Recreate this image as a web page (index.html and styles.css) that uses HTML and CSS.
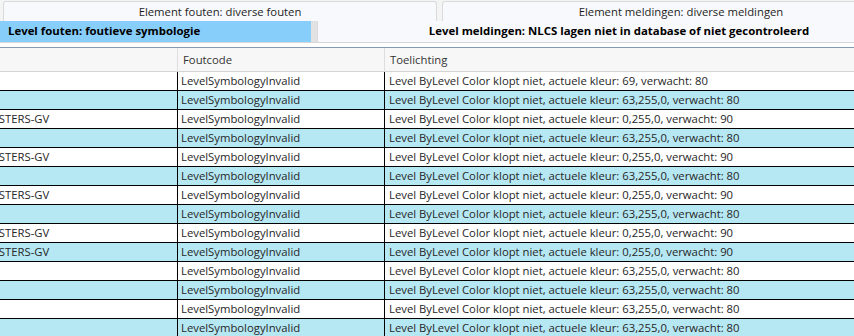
FILE: index.html
```html
<!DOCTYPE html>
<html lang="nl">
<head>
    <meta charset="UTF-8">
    <title>Controle resultaten</title>
    <link rel="stylesheet" href="styles.css">
</head>
<body>
    <div class="window">
        <div class="tab-row top">
            <div class="tab">Element fouten: diverse fouten</div>
            <div class="tab wide">Element meldingen: diverse meldingen</div>
        </div>
        <div class="tab-row front">
            <div class="tab selected">Level fouten: foutieve symbologie</div>
            <div class="tab wide">Level meldingen: NLCS lagen niet in database of niet gecontroleerd</div>
        </div>

        <div class="panel">
            <div class="grid-view">
                <div class="grid">
                    <div class="head">Level</div>
                    <div class="head">Foutcode</div>
                    <div class="head">Toelichting</div>
                </div>
                <div class="grid" id="rows"></div>
            </div>
        </div>
    </div>

    <script>
        // rijen met foutieve symbologie
        const rijen = [
            ['', '69', '80'],
            ['', '63,255,0', '80'],
            ['WEG-CLUSTERS-GV', '0,255,0', '90'],
            ['', '63,255,0', '80'],
            ['WEG-CLUSTERS-GV', '0,255,0', '90'],
            ['', '63,255,0', '80'],
            ['WEG-CLUSTERS-GV', '0,255,0', '90'],
            ['', '63,255,0', '80'],
            ['WEG-CLUSTERS-GV', '0,255,0', '90'],
            ['WEG-CLUSTERS-GV', '0,255,0', '90'],
            ['', '63,255,0', '80'],
            ['', '63,255,0', '80'],
            ['', '63,255,0', '80'],
            ['', '63,255,0', '80']
        ];

        const rows = document.getElementById('rows');
        rijen.forEach((r, i) => {
            const cls = i % 2 ? 'cell alt' : 'cell';
            rows.insertAdjacentHTML('beforeend',
                `<div class="${cls}">${r[0]}</div>` +
                `<div class="${cls} code">LevelSymbologyInvalid</div>` +
                `<div class="${cls} note">Level ByLevel Color klopt niet, actuele kleur: ${r[1]}, verwacht: ${r[2]}</div>`);
        });
    </script>
</body>
</html>
```

FILE: styles.css
```css
* {
    margin: 0;
    padding: 0;
    box-sizing: border-box;
}

body {
    font-family: 'Open Sans', 'Liberation Sans', sans-serif;
    font-size: 11.3px;
    color: #262626;
    background: #ffffff;
    overflow: hidden;
}

.window {
    width: 854px;
    height: 336px;
    overflow: hidden;
}

/* Tabbladen */
.tab-row {
    display: flex;
    width: 940px;
}

.tab-row.top {
    height: 21px;
    padding-top: 1px;
    padding-left: 3px;
    gap: 5px;
    background: #f4f4f4;
}

.tab-row.front {
    height: 22px;
    gap: 6px;
    background: #e2e2e2;
    border-bottom: 1px solid #d6d6d6;
}

.tab {
    height: 20px;
    line-height: 19px;
    text-align: center;
    background: #f8f9fc;
    border: 1px solid #dadada;
    border-bottom: none;
    border-radius: 3px 3px 0 0;
    width: 434px;
    color: #1e1e1e;
}

.tab.wide {
    width: 478px;
}

.tab-row.front .tab {
    height: 21px;
    line-height: 20px;
    font-size: 11.4px;
    font-weight: 700;
    color: #000;
    width: 604px;
    border-radius: 0;
    border-top: none;
}

.tab-row.front .tab.selected {
    width: 311px;
    background: #87cefa;
    border: none;
    text-align: left;
    padding-left: 8px;
}

/* Tabel */
.panel {
    margin-top: 4px;
    border-top: 1px solid #8499b3;
}

/* horizontaal gescrold: eerste kolom valt deels buiten beeld */
.grid-view {
    margin-left: -55px;
}

.grid {
    display: grid;
    grid-template-columns: 232px 207px 600px;
}

.head {
    height: 24px;
    line-height: 23px;
    padding-left: 5px;
    background: #f7f7f7;
    border-bottom: 1px solid #d4d4d4;
    border-left: 1px solid #dedede;
    color: #333;
}

.head:first-child {
    border-left: none;
}

.cell {
    height: 19px;
    line-height: 18px;
    padding-left: 4px;
    border-bottom: 1px solid #000;
    white-space: nowrap;
    overflow: hidden;
    background: #ffffff;
}

.cell.alt {
    background: #b6e8f4;
}

.cell.code,
.cell.note {
    border-left: 1px solid #000;
    padding-left: 3px;
}

.cell.note {
    padding-left: 4px;
}
```
